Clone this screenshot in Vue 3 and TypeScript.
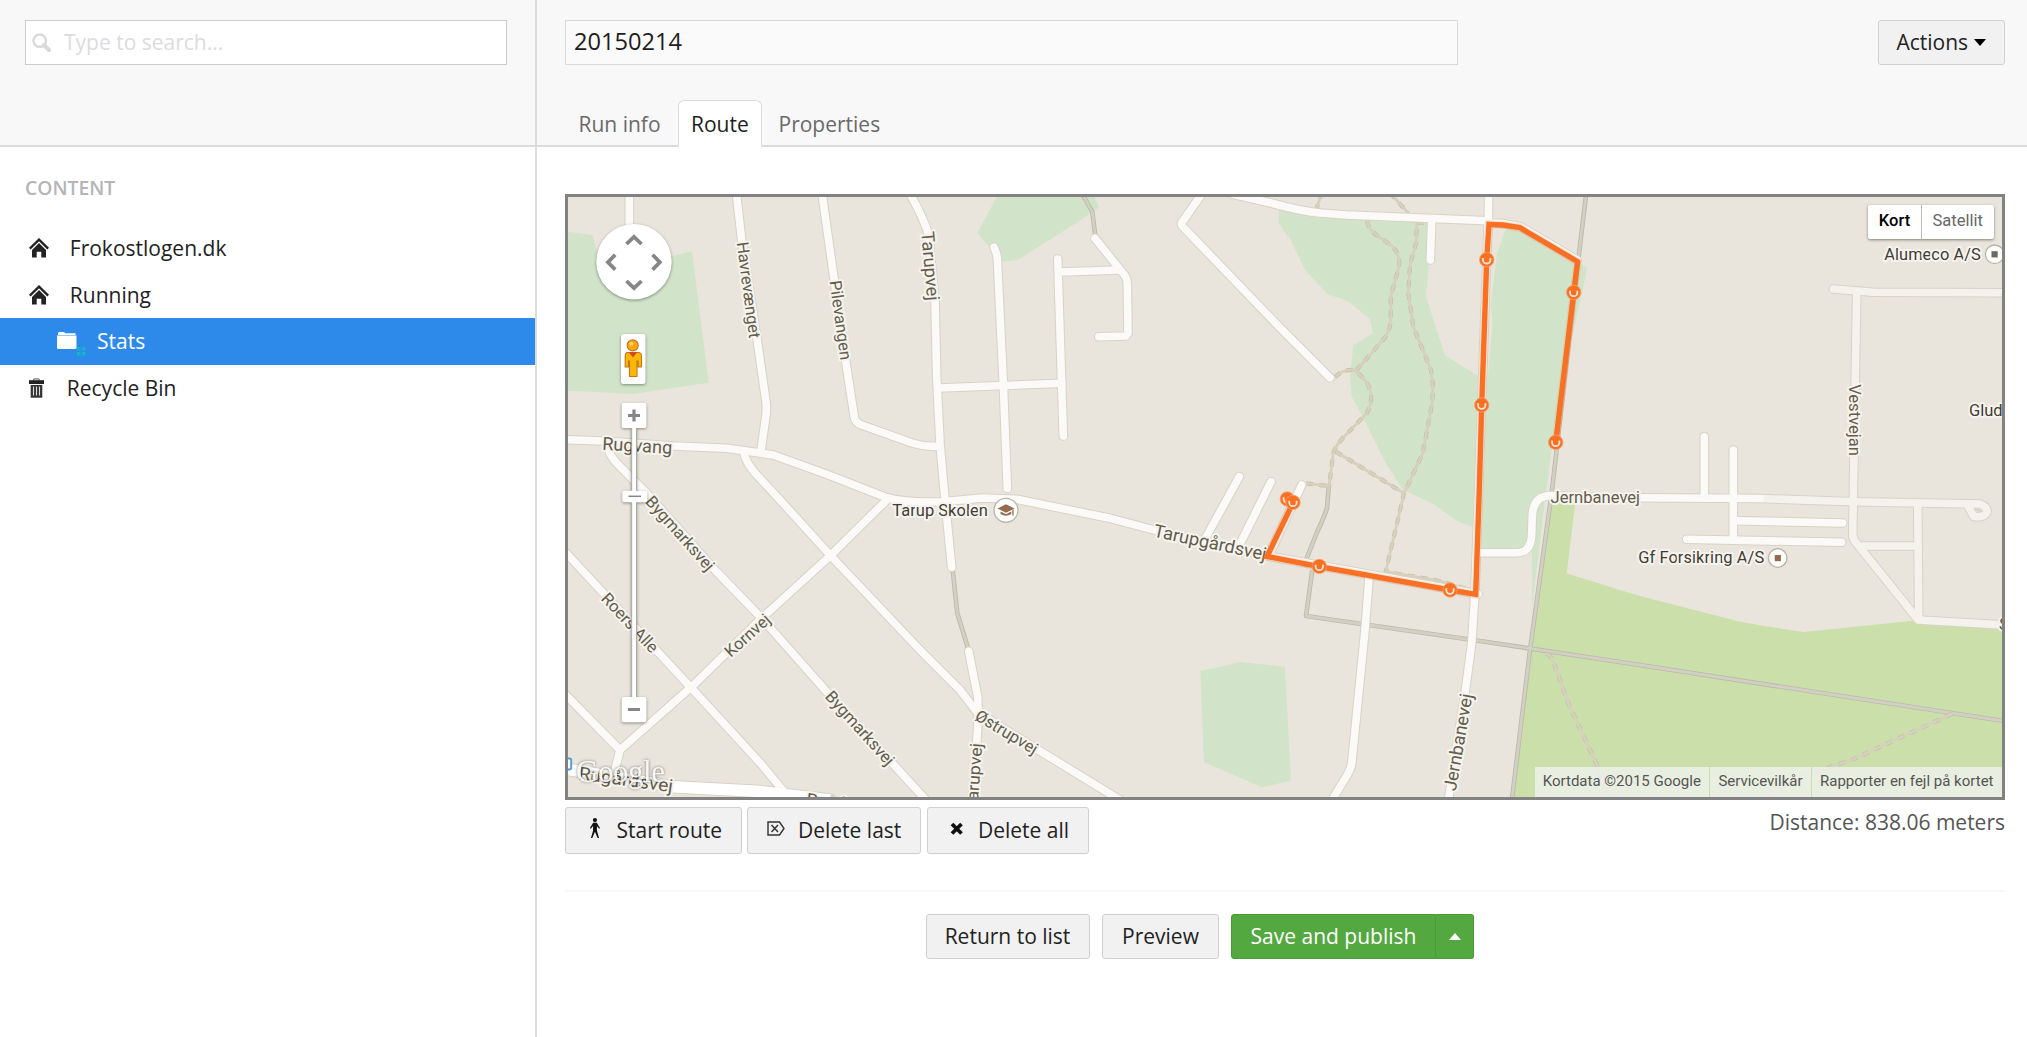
<script setup lang="ts">
import { ref } from 'vue'

interface TreeNode {
  label: string
  icon: 'home' | 'folder' | 'trash'
  level: number
  active?: boolean
}

interface MapLabel {
  text: string
  x: number
  y: number
  angle: number
  length: number
  size: number
}

interface Poi {
  text: string
  x: number
  y: number
  length?: number
}

const tree: TreeNode[] = [
  { label: 'Frokostlogen.dk', icon: 'home', level: 1 },
  { label: 'Running', icon: 'home', level: 1 },
  { label: 'Stats', icon: 'folder', level: 2, active: true },
  { label: 'Recycle Bin', icon: 'trash', level: 0 },
]

const tabs = ['Run info', 'Route', 'Properties']
const activeTab = ref('Route')
const title = ref('20150214')

const parks: string[] = [
  '568,231.7 592.3,235 599,258 673,256 692,251 708.7,382.7 633,394 568,390.7',
  '997.3,196 1093.7,196 1099.3,207.3 1076.7,222.7 1018.3,259.7 1001.7,262 977.3,232.7',
  '1200.3,671 1240.7,662 1285,666.7 1291,780.7 1261.7,787.3 1204,762.3',
  '1279,210 1278.3,222.7 1290.7,240 1305,270 1328.3,295 1340,298 1350,302.7 1370,319.3 1373,333.3 1353.3,345.3 1350,376.7 1351.7,396.7 1361.7,415 1385,461.7 1403.3,490 1433.3,504 1458.3,521.7 1473.3,527.3 1480.7,549 1531.7,552 1532.3,606.7 1545,500 1551.7,450 1571.7,340 1587.3,268.3 1580,263.3 1516.7,228 1505.3,230 1496.7,255 1490.7,305 1492.7,320 1488,376.7 1476.7,375 1445,355.3 1426,296.7 1429,261.7 1431.7,218 1340,215',
]

const forest =
  '1549.3,500 1575,505 1566.7,573.3 1620,590 1640,596 1740,621.7 1771.7,627.3 1803.3,632 1913.3,620.7 2002,628 2002,797 1514,797'

const roads: string[] = [
  'M629.3 190V230',
  'M736 190L741.7 240L756.7 336.7L766 401.7Q767 411 765.3 420L760.7 453',
  'M821.5 190L846 363.3L854.3 416.7Q855 422.5 861.7 425L912 443Q926 447.5 940 446',
  'M906 187L911.7 197Q922 215 928.3 233.3L935 300L936.7 376.7L940 443.3L945 500L951.7 567.3',
  'M968.7 651.3L977.7 696.7L978.3 716.7L976.7 743.3L972 800',
  'M560 439.5L603.3 441L673.3 446L726.7 448.3L760 453L773.3 455L826.7 474.3L886.7 497.7Q910 503.5 943 501.7L981.7 498L1016.7 499.3L1110 518.3L1156.7 530.7L1268 556L1478 594',
  'M608.3 446Q608 455 620 466.5L646.7 493.3L715 570L761.7 618.3L826.7 691.7L926 800',
  'M744 453Q746 463 756 474L780 500L830 555L920 650L960 690L976.7 711.7L1038.3 750L1120 800',
  'M886 500.7L830 556L761.7 618.3L691.7 686.7L620 750L615 770',
  'M562 549L568 555L691.7 688.3L760 762.7L790 799',
  'M560 689L620 750',
  'M994 247.3Q997 254 997.3 258.3L1003.3 383.3L1007.3 488.3',
  'M938.3 388L1061.7 383.3',
  'M1057.7 259L1063.3 436',
  'M1060 272L1120 270',
  'M1095 238.3L1121.7 271.7Q1127.3 277 1127.3 283.3L1128 333.3L1126 336L1098.7 336.7',
  'M1206 188L1181.7 222.7Q1180.5 225 1185 229L1280 327.7L1330 377.7',
  'M1232 194L1270 202.7Q1300 211 1320 213L1346.7 215L1488.3 220.7',
  'M1431.7 221.7L1430.3 260',
  'M1488.7 190L1488.3 223L1486.7 260L1478.3 500L1474.7 596.7L1471.7 643.3L1465 693.3L1448 803',
  'M1489 223L1503 223.5L1521 227L1577 260',
  'M1239.3 476.7L1205 539',
  'M1271 481.7L1239 546',
  'M1301.7 485L1269 555',
  'M1369 578.3L1365 630L1351.7 763.3Q1351 769 1346 777L1332 800',
  'M1480.7 552.7H1516.7Q1531.7 552.7 1531.7 533L1532.3 516Q1533 495 1552 495.5L1600 497.5L1760 498.5',
  'M1704.3 436.7V498',
  'M1733.3 450V539.3',
  'M1736.7 520.7L1842.7 523',
  'M1686.7 539.3L1841.7 542.3',
]

const serviceRoads: string[] = [
  'M1760 498.5L1853.3 501.7L1980 504Q1987.5 507 1987 512Q1984 518 1974 516.5L1968 506',
  'M1833.3 289L1873.3 292.3L2010 292.8',
  'M1856.7 292L1853.3 496.7L1852.7 535Q1853 540 1856.7 543.3L1918.3 620L2010 625.3',
  'M1917.7 503L1918.7 619',
  'M1863.3 546H1917.7',
]

const tracks: string[] = [
  'M952.7 570L957.3 613.3L968.3 649',
  'M1080 190L1092.3 211.7L1095.3 236',
  'M1329 484L1327 508Q1325 515 1316.7 533L1306 560',
  'M1312.3 570L1306 616L1480 641L1640 665L2010 722',
  'M1586.6 190L1578.3 260L1551.7 493L1530 650L1511.5 803',
]

const footpaths: string[] = [
  'M1322 192L1316.7 208',
  'M1390 193L1408.3 213',
  'M1367.3 220.7Q1368 230 1378 236L1392 246Q1400 254 1399.3 265L1390.7 296.7V320Q1390 333 1382 341L1356.7 370',
  'M1335 377.3Q1343 369 1354 370Q1368 380 1371 393Q1372 406 1366 414L1342 439Q1334 448 1333 455L1329 486.7',
  'M1424 223H1417L1416 243.3L1410 265L1408.3 293.3L1413.3 326.7L1431 370Q1434 385 1432 404L1422.7 453.3L1404 493.3L1385.7 571.7L1440 581L1466.7 589',
  'M1336 451.7L1404 493.3',
  'M1306 483.3L1329 486',
  'M1546.7 653.3Q1552 657 1554 663L1568.3 703.3L1613.3 800',
  'M1951.7 714L1853.3 759.3L1813 773L1758 799',
]

const labels: MapLabel[] = [
  { text: 'Havrevænget', x: 748.7, y: 290, angle: 82.5, length: 97, size: 16.5 },
  { text: 'Pilevangen', x: 840.7, y: 320, angle: 82.2, length: 80, size: 16.5 },
  { text: 'Tarupvej', x: 930.5, y: 266, angle: 85, length: 69.5, size: 18 },
  { text: 'Rugvang', x: 637.3, y: 445.5, angle: 3.5, length: 70, size: 18 },
  { text: 'Bygmarksvej', x: 680.2, y: 533.3, angle: 48.3, length: 94, size: 16.5 },
  { text: 'Bygmarksvej', x: 860, y: 728, angle: 48, length: 94, size: 16.5 },
  { text: 'Roers Alle', x: 630, y: 622.7, angle: 47, length: 75, size: 16.5 },
  { text: 'Kornvej', x: 747.3, y: 635.3, angle: -42, length: 55, size: 16.5 },
  { text: 'Tarupgårdsvej', x: 1210.2, y: 542.3, angle: 12, length: 115, size: 18 },
  { text: 'Østrupvej', x: 1006.7, y: 732, angle: 31, length: 70, size: 16.5 },
  { text: 'Tarupvej', x: 974, y: 776.5, angle: -86, length: 67, size: 16.5 },
  { text: 'Jernbanevej', x: 1458, y: 742, angle: -80, length: 98.5, size: 18 },
  { text: 'Jernbanevej', x: 1595.3, y: 497, angle: 0, length: 89.5, size: 16.5 },
  { text: 'Vestvejan', x: 1854.3, y: 420, angle: 90, length: 71.7, size: 16.5 },
  { text: 'Rugårdsvej', x: 626, y: 779.5, angle: 8, length: 95, size: 18 },
  { text: 'Rugårdsvej', x: 851, y: 805.5, angle: 8, length: 90, size: 18 },
  { text: 'S', x: 2004, y: 624, angle: 3, length: 10, size: 16.5 },
]

const pois: Poi[] = [
  { text: 'Tarup Skolen', x: 892.3, y: 515.7, length: 95.5 },
  { text: 'Gf Forsikring A/S', x: 1638.2, y: 563.2, length: 126 },
  { text: 'Alumeco A/S', x: 1884.3, y: 260, length: 96.5 },
  { text: 'Glud', x: 1969, y: 416.3 },
]

const route =
  'M1555.7 442.7L1573.7 292.7L1577.6 261.7L1520 227.7L1503 225L1489 224.3L1486.7 260L1481.7 405L1479.3 490L1475.7 594.3L1450 590L1319.3 566.7L1267 556.5L1293 502.7L1287.3 499'

const markers: [number, number][] = [
  [1555.7, 442.3],
  [1573.7, 292.4],
  [1486.7, 259.7],
  [1481.7, 405],
  [1450, 590],
  [1319.3, 566.4],
  [1287.3, 499],
  [1293, 502.4],
]
</script>

<template>
  <div class="app">
    <aside class="sidebar">
      <div class="search-area">
        <div class="search">
          <svg class="search-icon" viewBox="0 0 19 19">
            <circle cx="7.7" cy="7.7" r="6.2" fill="none" stroke="#d9d9d9" stroke-width="2.4" />
            <path d="M12 12l5 5" stroke="#d9d9d9" stroke-width="4" stroke-linecap="round" />
          </svg>
          <span>Type to search...</span>
        </div>
      </div>
      <h5 class="section">CONTENT</h5>
      <ul class="tree">
        <li v-for="n in tree" :key="n.label" :class="['node', 'level-' + n.level, { active: n.active }]">
          <svg v-if="n.icon === 'home'" class="ico" viewBox="0 0 20 20">
            <path d="M.8 10.6L10 1.6l9.2 9" fill="none" stroke="#222" stroke-width="2.3" />
            <path d="M10 5l7 7V19.500h-4.700v-5.700H7.700v5.700H3v-7.500z" fill="#222" />
          </svg>
          <svg v-else-if="n.icon === 'folder'" class="ico folder" viewBox="0 0 29 24">
            <path d="M1 1.500Q1 0 2.500 0H7l1.500 1.300H18.500V3H1z" fill="#fff" />
            <path d="M0 3.600H19.500V15.500Q19.500 17 18 17H1.500Q0 17 0 15.500z" fill="#fff" />
            <path d="M20 15h3.400v3.400H20zM25 15h3.400v3.400H25zM20 20h3.400v3.400H20zM25 20h3.400v3.400H25z" fill="#0fb8c4" />
          </svg>
          <svg v-else class="ico trash" viewBox="0 0 15 20">
            <path d="M4.500 2.500Q4.500.8 6 .8h3q1.500 0 1.500 1.700" fill="none" stroke="#777" stroke-width="1.200" />
            <path d="M0 2.200h15V6H0z" fill="#222" />
            <path d="M1.700 7h11.600v12.700H1.700z" fill="#333" />
            <path d="M4.500 8.500v9M7.500 8.500v9M10.500 8.500v9" stroke="#ddd" stroke-width="1.100" />
          </svg>
          <span>{{ n.label }}</span>
        </li>
      </ul>
    </aside>

    <main class="content">
      <header class="header">
        <div class="title-row">
          <input v-model="title" class="title" type="text" />
          <button class="btn actions">Actions<i class="caret down"></i></button>
        </div>
        <nav class="tabs">
          <a v-for="t in tabs" :key="t" :class="['tab', { active: t === activeTab }]" @click="activeTab = t">{{ t }}</a>
        </nav>
      </header>

      <section class="body">
        <div class="map">
          <svg class="canvas" viewBox="568 197 1434 600">
            <rect x="568" y="197" width="1434" height="600" fill="#e9e5dc" />
            <polygon v-for="p in parks" :key="p" :points="p" fill="#d1e4c9" />
            <polygon :points="forest" fill="#cadfaa" />

            <g fill="none" stroke-linejoin="round">
              <g stroke="#bdbaab" stroke-width="4.6"><path v-for="d in tracks" :key="d" :d="d" /></g>
              <g stroke="#d1d0c3" stroke-width="2.8"><path v-for="d in tracks" :key="d" :d="d" /></g>
              <g stroke="#c5bfaa" stroke-width="4.2" stroke-dasharray="7 6"><path v-for="d in footpaths" :key="d" :d="d" /></g>
              <g stroke="#d5d1bd" stroke-width="2.8"><path v-for="d in footpaths" :key="d" :d="d" /></g>
              <g stroke="#d8d2c6" stroke-width="9.6" stroke-linecap="round">
                <path v-for="d in roads" :key="d" :d="d" />
                <path v-for="d in serviceRoads" :key="d" :d="d" />
                <path d="M560 768L673 786.700L760 791.500L830 800" stroke-width="13.500" />
              </g>
              <g stroke="#f5f2ee" stroke-width="7.6" stroke-linecap="round"><path v-for="d in serviceRoads" :key="d" :d="d" /></g>
              <g stroke="#fbfaf8" stroke-width="7.6" stroke-linecap="round"><path v-for="d in roads" :key="d" :d="d" /></g>
              <path d="M560 768L673 786.700L760 791.500L830 800" stroke="#fff" stroke-width="11.500" />
            </g>
            <path d="M1975 509.500q5-1 7 1.500q-4 2-7-1.500z" fill="#d8d2c6" />

            <rect x="563" y="758.500" width="8.200" height="11" rx="1.500" fill="#fff" stroke="#4f9be0" stroke-width="1.900" />

            <g class="road-labels">
              <text
                v-for="(l, i) in labels"
                :key="i"
                :transform="`translate(${l.x} ${l.y}) rotate(${l.angle})`"
                :font-size="l.size"
                :textLength="l.length"
                dy=".35em"
                lengthAdjust="spacingAndGlyphs"
              >{{ l.text }}</text>
            </g>
            <g class="poi-labels">
              <text v-for="p in pois" :key="p.text" :x="p.x" :y="p.y" :textLength="p.length">{{ p.text }}</text>
            </g>

            <circle cx="1006" cy="510.300" r="12" fill="#fff" stroke="#b9b4a8" stroke-width="1.300" />
            <path d="M997.500 508.500l8.500-4.300 8.500 4.300-8.500 4.300z" fill="#956b4b" />
            <path d="M1000.500 511.500l5.500 2.700 5.300-2.600v2.500q-5.300 3.500-10.800 0zM1012.300 509.500h1.300v6h-1.300z" fill="#956b4b" />
            <circle cx="1777.700" cy="558" r="9.300" fill="#fff" stroke="#b9b4a0" stroke-width="1.300" />
            <rect x="1774.700" y="555" width="6.200" height="6.200" fill="#956b4b" />
            <circle cx="1994.700" cy="254.300" r="9.300" fill="#fff" stroke="#b9b4a0" stroke-width="1.300" />
            <rect x="1991.500" y="251.200" width="6.200" height="6.200" fill="#6b685f" />

            <path :d="route" fill="none" stroke="#f77024" stroke-opacity=".15" stroke-width="8" />
            <path :d="route" fill="none" stroke="#f77024" stroke-width="5.4" />
            <g v-for="(m, i) in markers" :key="i" :transform="`translate(${m[0]} ${m[1]})`">
              <circle r="7.2" fill="#f77024" stroke="#f9a06b" stroke-width=".8" />
              <path d="M-3.700-1.700V.3A3.700 3.500 0 0 0 3.700.3V-1.700" fill="none" stroke="#fde6d8" stroke-width="1.800" />
            </g>

            <text class="google" x="576" y="782" textLength="89">Google</text>

            <g class="control">
              <circle cx="634" cy="261.700" r="37.700" fill="#fff" />
              <g fill="none" stroke="#868686" stroke-width="3.800">
                <path d="M626.500 244l7.500-7.200 7.500 7.200M626.500 281l7.500 7.200 7.500-7.200M615.200 254.800l-7.200 7.400 7.200 7.400M652.600 254.800l7.200 7.400-7.200 7.400" />
              </g>
            </g>
            <g class="control"><rect x="621" y="334" width="24.500" height="50" rx="2.500" fill="#fff" /></g>
            <g stroke="#c1741b" stroke-width="1.100">
              <path d="M627.500 352.500h10.500q3.500 0 3.500 4v10.500h-3.300v-6h-1.200v15.500h-7.500v-15.500h-1v6h-3.300v-10.500q0-4 2.300-4z" fill="#fbb704" />
              <circle cx="632.700" cy="345.400" r="5.500" fill="#fba50d" />
            </g>
            <path d="M629 352.300h8l-4 5.200z" fill="#d9402b" />
            <circle cx="631.300" cy="343.700" r="2" fill="#ffd45c" />

            <g class="control">
              <rect x="631.700" y="427" width="4.800" height="271" fill="#fff" stroke="#aaa8a3" stroke-width=".9" />
              <rect x="621.700" y="402.700" width="24.700" height="25.300" rx="2" fill="#fff" />
              <rect x="621.700" y="697" width="24.700" height="25.300" rx="2" fill="#fff" />
              <rect x="622.300" y="490.800" width="25" height="11.500" rx="2" fill="#fff" />
            </g>
            <path d="M628 415.500h12M634 409.500v12M628 709.500h12" stroke="#868686" stroke-width="3.200" />
            <path d="M628.500 496.300h12.500" stroke="#868686" stroke-width="1.500" />
          </svg>

          <div class="map-type">
            <span class="current">Kort</span>
            <span>Satellit</span>
          </div>
          <div class="attribution">
            <span>Kortdata ©2015 Google</span>
            <span>Servicevilkår</span>
            <span>Rapporter en fejl på kortet</span>
          </div>
        </div>

        <div class="map-tools">
          <button class="btn start">
            <svg viewBox="0 0 12.500 21">
              <circle cx="6.200" cy="2.200" r="2.200" fill="#111" />
              <path d="M4.300 5h3.800l3.400 5.500-.9.700L8.300 8.500v5L10.500 21H9L6.200 14.500 3.400 21H2L4.200 13.500v-5L1.800 11.200l-.9-.7z" fill="#111" />
            </svg>
            <span>Start route</span>
          </button>
          <button class="btn last">
            <svg viewBox="0 0 18 15">
              <path d="M1 1h11.500L17 7.500 12.500 14H1z" fill="none" stroke="#333" stroke-width="1.400" />
              <path d="M4.500 4l6.500 7M11 4l-6.500 7" stroke="#333" stroke-width="1.500" />
            </svg>
            <span>Delete last</span>
          </button>
          <button class="btn all">
            <svg viewBox="0 0 14 13">
              <path d="M2 2l9.500 9.500M11.500 2L2 11.500" stroke="#111" stroke-width="3.800" />
            </svg>
            <span>Delete all</span>
          </button>
          <span class="distance">Distance: 838.06 meters</span>
        </div>

        <footer class="footer">
          <button class="btn return">Return to list</button>
          <button class="btn preview">Preview</button>
          <div class="split">
            <button class="btn save">Save and publish</button>
            <button class="btn more"><i class="caret up"></i></button>
          </div>
        </footer>
      </section>
    </main>
  </div>
</template>

<style>
body {
  margin: 0;
  background: #fff;
}
</style>

<style scoped>
.app {
  display: flex;
  width: 2027px;
  height: 1037px;
  overflow: hidden;
  background: #fff;
  color: #222;
  font: 21px/30px 'Open Sans', sans-serif;
}
.sidebar {
  box-sizing: border-box;
  width: 537px;
  height: 100%;
  border-right: 2px solid #dcdcdc;
  flex: none;
}
.search-area {
  box-sizing: border-box;
  height: 147px;
  padding: 19.500px 0 0 25px;
  background: #f8f8f8;
  border-bottom: 2px solid #dcdcdc;
}
.search {
  box-sizing: border-box;
  display: flex;
  align-items: center;
  width: 481.500px;
  height: 45px;
  padding-left: 5.500px;
  background: #fff;
  border: 1.500px solid #ccc;
  color: #dcdcdc;
}
.search-icon {
  width: 19px;
  height: 19px;
  margin-right: 13.500px;
}
.section {
  margin: 0;
  padding: 26px 25px 0;
  height: 52px;
  font-size: 19.300px;
  line-height: 30px;
  font-weight: 600;
  color: #b5b5b5;
}
.tree {
  margin: 0;
  padding: 0;
  list-style: none;
}
.node {
  display: flex;
  align-items: center;
  height: 46.500px;
  padding-left: 29px;
}
.ico {
  width: 20px;
  height: 20px;
  margin-right: 20.800px;
}
.node.level-2 {
  padding-left: 56.500px;
}
.ico.folder {
  width: 29px;
  height: 24px;
  margin: 6px 11.500px 0 0;
}
.ico.trash {
  width: 15px;
  margin-right: 22.800px;
}
.node.active {
  background: #2e8aea;
  color: #fff;
}
.content {
  flex: 1;
  min-width: 0;
}
.header {
  box-sizing: border-box;
  height: 147px;
  padding: 19.500px 22px 0 28px;
  background: #f8f8f8;
  border-bottom: 2px solid #dcdcdc;
  display: flex;
  flex-direction: column;
  justify-content: space-between;
}
.title-row {
  display: flex;
  justify-content: space-between;
}
.title {
  box-sizing: border-box;
  width: 892.500px;
  height: 45px;
  padding: 0 8px 2px;
  border: 1.500px solid #dadada;
  border-radius: 0;
  background: #fafafa;
  font: 23.600px 'Open Sans', sans-serif;
  color: #1d1d1d;
  outline: none;
}
.btn {
  box-sizing: border-box;
  display: flex;
  align-items: center;
  justify-content: center;
  height: 45px;
  padding: 0;
  border: 1.500px solid #d0d0d0;
  border-radius: 3px;
  background: #f1f1f1;
  color: #222;
  font: 21px 'Open Sans', sans-serif;
}
.actions {
  width: 127.500px;
}
.caret {
  display: inline-block;
  border-left: 6px solid transparent;
  border-right: 6px solid transparent;
}
.caret.down {
  margin-left: 6px;
  border-top: 7px solid #000;
}
.caret.up {
  border-bottom: 7px solid #fff;
}
.tabs {
  display: flex;
  margin-bottom: -2px;
}
.tab {
  box-sizing: border-box;
  height: 47px;
  padding: 8px 12.500px 0;
  border: 1.500px solid transparent;
  border-bottom: 0;
  border-radius: 6px 6px 0 0;
  color: #6a6a6a;
}
.tab:first-child {
  width: 112.500px;
}
.tab.active {
  width: 84px;
  background: #fff;
  border-color: #dcdcdc;
  color: #1d1d1d;
}
.tab:last-child {
  padding-left: 16px;
}
.body {
  padding: 47px 22px 0 28px;
}
.map {
  position: relative;
  box-sizing: border-box;
  width: 1440px;
  height: 606px;
  border: 3px solid #828282;
  overflow: hidden;
  font-family: Roboto, sans-serif;
}
.canvas {
  display: block;
  width: 1434px;
  height: 600px;
}
.road-labels text {
  text-anchor: middle;
}
.road-labels text,
.poi-labels text {
  font-family: Roboto, sans-serif;
  fill: #625d4b;
  stroke: #f6f3ee;
  stroke-width: 4px;
  stroke-linejoin: round;
  paint-order: stroke;
}
.poi-labels text {
  font-size: 16.500px;
  fill: #3f3c33;
}
.google {
  font: 31px 'Liberation Serif', serif;
  fill: #fff;
  fill-opacity: 0.9;
  filter: drop-shadow(0 0 1.500px rgba(0, 0, 0, 0.55));
}
.control {
  filter: drop-shadow(0 1px 1.500px rgba(0, 0, 0, 0.4));
}
.map-type {
  position: absolute;
  top: 8px;
  right: 8.500px;
  display: flex;
  box-sizing: border-box;
  height: 34px;
  background: #fff;
  border-radius: 2px;
  box-shadow: 0 1px 3px rgba(0, 0, 0, 0.45);
  font-size: 16.500px;
  line-height: 32px;
  color: #666;
}
.map-type span {
  box-sizing: border-box;
  width: 71.500px;
  text-align: center;
}
.map-type .current {
  width: 54px;
  border-right: 1.500px solid #bbb;
  font-weight: 500;
  color: #000;
}
.attribution {
  position: absolute;
  right: 0;
  bottom: 0;
  display: flex;
  height: 30px;
  gap: 1px;
  font-size: 15px;
  line-height: 29px;
  color: #555;
  white-space: nowrap;
}
.attribution span {
  padding: 0 8.500px 0 8px;
  background: rgba(245, 245, 245, 0.72);
}
.map-tools {
  display: flex;
  align-items: flex-start;
  padding-top: 7px;
}
.map-tools .btn {
  height: 46.500px;
  justify-content: flex-start;
}
.map-tools .start {
  width: 176.500px;
  margin-right: 5px;
  padding-left: 23px;
}
.start svg {
  width: 12px;
  height: 20px;
  margin: -4px 15.500px 0 0;
}
.map-tools .last {
  width: 174px;
  margin-right: 6px;
  padding-left: 19.500px;
}
.last svg {
  width: 18px;
  height: 15px;
  margin: -3px 13px 0 0;
}
.map-tools .all {
  width: 162px;
  padding-left: 22px;
}
.all svg {
  width: 14px;
  height: 13px;
  margin: -3px 14.500px 0 0;
}
.distance {
  margin-left: auto;
  color: #555;
}
.footer {
  display: flex;
  margin-top: 36.500px;
  padding: 21.500px 0 0 360.500px;
  border-top: 2px solid #f7f7f7;
}
.return {
  width: 164px;
  margin-right: 12.500px;
}
.preview {
  width: 117px;
  margin-right: 12px;
}
.split {
  display: flex;
}
.save {
  width: 205px;
  border-color: #4a9b38;
  border-radius: 3px 0 0 3px;
  background: #53a93f;
  color: #fff;
}
.more {
  width: 38px;
  border-color: #4a9b38;
  border-left: 0;
  border-radius: 0 3px 3px 0;
  background: #53a93f;
}
</style>
